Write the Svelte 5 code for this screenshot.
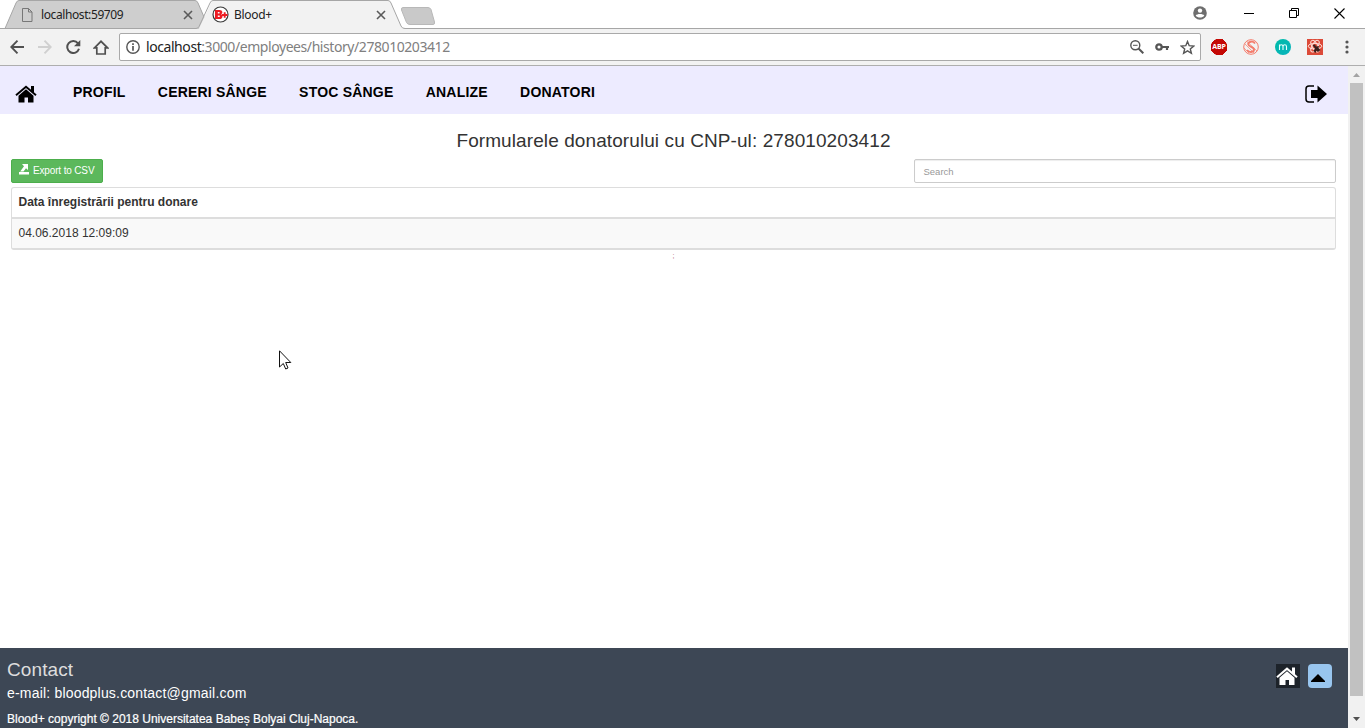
<script>
  const links = ['PROFIL', 'CERERI SÂNGE', 'STOC SÂNGE', 'ANALIZE', 'DONATORI'];
  const rows = ['04.06.2018 12:09:09'];
</script>

<div class="window">
  <div class="tabstrip">
    <svg class="tabshapes" width="440" height="29" viewBox="0 0 440 29">
      <path d="M5 28.5 16 3Q17 .5 19 .5H195Q197 .5 198 3L209 28.5Z" fill="#cecece" stroke="#a6a6a6" />
      <path d="M0 28.5H199L211 3Q212 .5 214 .5H388Q390 .5 391 3L401 26Q402 28.5 405 28.5V29H0Z" fill="#f2f2f2" />
      <path d="M0 28.5H196Q198 28.500 199 26.500L210 3Q211 .5 213 .5H388Q390 .5 391 3L401 26Q402 28.5 405 28.5H440" fill="none" stroke="#a6a6a6" />
      <path d="M403 7.5H428Q430 7.5 431 9.5L434.500 22Q435 24.500 433 24.500H410Q407.500 24.500 406.500 22.500L401.500 10Q401 7.500 403 7.500Z" fill="#c9c9c9" stroke="#b8b8b8" />
    </svg>
    <div class="tab first">
      <svg width="11" height="14" viewBox="0 0 11 14"><path d="M.5.5H6.500L10 4V13.500H.5ZM6.500.5V4H10" fill="none" stroke="#777" /></svg>
      <span>localhost:59709</span>
      <svg class="x" width="10" height="10" viewBox="0 0 10 10"><path d="M1 1 9 9M9 1 1 9" stroke="#5a5a5a" stroke-width="1.600" /></svg>
    </div>
    <div class="tab second">
      <svg width="17" height="17" viewBox="0 0 17 17">
        <circle cx="8.500" cy="8.500" r="7.500" fill="#fff" stroke="#3b3b3b" stroke-width="1.200" />
        <path fill-rule="evenodd" d="M3 4H7.500C11 4 11 7.500 9.200 8.200C11.300 9 11 13 7.500 13H3ZM5.800 6V7.400H7.400Q8 6.700 7.400 6ZM5.800 9.400V11H7.500Q8.300 10.200 7.500 9.400Z" fill="#ed1c24" /><path d="M10 9H15.500M12.700 6.300V11.700" stroke="#ed1c24" stroke-width="1.900" />
      </svg>
      <span>Blood+</span>
      <svg class="x" width="10" height="10" viewBox="0 0 10 10"><path d="M1 1 9 9M9 1 1 9" stroke="#5a5a5a" stroke-width="1.600" /></svg>
    </div>
    <div class="controls">
      <svg width="14" height="14" viewBox="0 0 14 14"><circle cx="7" cy="7" r="6.800" fill="#6e6e6e" /><circle cx="7" cy="4.600" r="2.200" fill="#fff" /><path d="M2.700 9.500C4 7.500 10 7.500 11.300 9.500C9.500 12.300 4.500 12.300 2.700 9.500Z" fill="#fff" /></svg>
      <svg width="10" height="12" viewBox="0 0 10 12"><path d="M0 6.500H10" stroke="#000" /></svg>
      <svg width="10" height="10" viewBox="0 0 10 10"><path d="M.5 2.500H7.500V9.500H.5ZM2.500 2.500V.5H9.500V7.500H7.500" fill="none" stroke="#000" /></svg>
      <svg width="11" height="11" viewBox="0 0 11 11"><path d="M.5.5 10.500 10.500M10.500.5.5 10.500" stroke="#000" stroke-width="1.100" /></svg>
    </div>
  </div>

  <div class="toolbar">
    <div class="navicons">
      <svg width="14" height="14" viewBox="0 0 14 14"><path d="M14 7H1.500M7.500.7 1.300 7 7.500 13.300" fill="none" stroke="#505050" stroke-width="1.900" /></svg>
      <svg width="14" height="14" viewBox="0 0 14 14"><path d="M0 7H12.500M6.500.7 12.700 7 6.500 13.300" fill="none" stroke="#d0d0d0" stroke-width="1.900" /></svg>
      <svg width="15" height="14" viewBox="0 0 15 14"><path d="M12 3.300A6 6 0 1 0 13 8.800" fill="none" stroke="#505050" stroke-width="2" /><path d="M14.300 0V6.300H8Z" fill="#505050" /></svg>
      <svg width="16" height="15" viewBox="0 0 16 15"><path d="M1.500 7.800 8 1.300 14.500 7.800H12.200V14H3.800V7.800Z" fill="none" stroke="#505050" stroke-width="1.700" /></svg>
    </div>
    <div class="address">
      <svg width="14" height="14" viewBox="0 0 14 14"><circle cx="7" cy="7" r="6.200" fill="none" stroke="#555" stroke-width="1.400" /><path d="M7 6V10.800M7 3.300V5" stroke="#555" stroke-width="1.700" /></svg>
      <span class="url">localhost<i>:3000/employees/history/278010203412</i></span>
      <div class="boxicons">
        <svg width="14" height="14" viewBox="0 0 14 14"><circle cx="5.300" cy="5.300" r="4.500" fill="none" stroke="#555" stroke-width="1.400" /><path d="M8.500 8.500 13.300 13.300" stroke="#555" stroke-width="2" /><path d="M3 5.300H7.600" stroke="#555" /></svg>
        <svg width="14" height="8" viewBox="0 0 14 8"><circle cx="4" cy="4" r="2.700" fill="none" stroke="#555" stroke-width="2.300" /><path d="M7 4H14M12 4V7" stroke="#555" stroke-width="2.200" /></svg>
        <svg width="15" height="15" viewBox="0 0 15 15"><path d="M7.500 1.500 9.200 5.700 13.800 6 10.300 8.900 11.400 13.300 7.500 10.900 3.600 13.300 4.700 8.900 1.200 6 5.800 5.700Z" fill="none" stroke="#555" stroke-width="1.400" /></svg>
      </div>
    </div>
    <div class="extensions">
      <div class="abp"><span>ABP</span></div>
      <svg width="16" height="16" viewBox="0 0 16 16" fill="none" stroke="#f47c6c"><circle cx="8" cy="8" r="7.300" /><path d="M12 4.500C10 1.500 5 2.500 5.200 5.300C5.400 8.200 11 7.500 11 10.500C11 13.500 6 14 4 11" stroke-width="1.900" /><path d="M2 5 11 14M4 2.500 14 12M1 9 6 14" stroke-width=".7" /></svg>
      <svg width="16" height="16" viewBox="0 0 16 16"><defs><linearGradient id="m" x2="1" y2="1"><stop stop-color="#00bca8" /><stop offset="1" stop-color="#08b2bd" /></linearGradient></defs><circle cx="8" cy="8" r="8" fill="url(#m)" /><path d="M4.500 11V5.500M4.500 7.500Q4.700 5.700 6.300 5.700T8 7.500V11M8 7.500Q8.200 5.700 9.800 5.700T11.500 7.500V11" fill="none" stroke="#e8ffff" stroke-width="1.100" /></svg>
      <svg width="16" height="16" viewBox="0 0 16 16"><path d="M0 0H16V16H0Z" fill="#dc4a38" /><g fill="none" stroke="#ffe1da" stroke-width="1"><ellipse cx="8" cy="7.200" rx="6.800" ry="2.800" /><ellipse cx="8" cy="7.200" rx="6.500" ry="2.800" transform="rotate(60 8 7.200)" /><ellipse cx="8" cy="7.200" rx="6.500" ry="2.800" transform="rotate(120 8 7.200)" /></g><path d="M5.500 6 8 5.500 9 7.500 12 7 11.500 9 13.500 11 11 13 9.500 11.500 8.500 14 6.500 12 8 9.500Z" fill="#38201d" /></svg>
      <svg class="dots" width="4" height="14" viewBox="0 0 4 14" fill="#555"><circle cx="2" cy="2" r="1.600" /><circle cx="2" cy="7" r="1.600" /><circle cx="2" cy="12" r="1.600" /></svg>
    </div>
  </div>

  <div class="view">
    <div class="page">
      <nav>
        <svg class="home" width="22" height="18" viewBox="0 0 22 18"><path d="M1 10.300 11 1.700 21 10.300" fill="none" stroke="#000" stroke-width="1.900" /><path d="M16 1H19V8L16 5.500ZM11 4.300 18.500 10.800V17.500H13V12.500H9.500V17.500H3.500V10.800Z" /></svg>
        <div class="links">{#each links as link}<span>{link}</span>{/each}</div>
        <svg class="logout" width="22" height="18" viewBox="0 0 22 18"><path d="M9 1H4Q1 1 1 4V14Q1 17 4 17H9" fill="none" stroke="#000" stroke-width="1.500" /><path d="M6 5H12.500V.5L22 9 12.500 17.500V13H6Z" /></svg>
      </nav>
      <main>
        <h1>Formularele donatorului cu CNP-ul: 278010203412</h1>
        <div class="tools">
          <button><svg width="10" height="11" viewBox="0 0 10 11" fill="#fff"><path d="M0 8H10V10.500H0ZM3 0H9V6L7 4.300 4.500 7.500H1.200L5 2.300Z" /></svg><span>Export to CSV</span></button>
          <div class="search"><span>Search</span></div>
        </div>
        <div class="table">
          <div class="head"><span>Data înregistrării pentru donare</span></div>
          {#each rows as row}<div class="row"><span>{row}</span></div>{/each}
        </div>
        <div class="semi">;</div>
      </main>
      <footer>
        <div class="info">
          <h2>Contact</h2>
          <p class="mail">e-mail: bloodplus.contact@gmail.com</p>
          <p class="copy">Blood+ copyright © 2018 Universitatea Babeș Bolyai Cluj-Napoca.</p>
        </div>
        <div class="shortcuts">
          <div class="dark"><svg width="22" height="18" viewBox="0 0 22 18" fill="#fff"><path d="M1 10.300 11 1.700 21 10.300" fill="none" stroke="#fff" stroke-width="2.100" /><path d="M16 .5H19V8L16 5.500ZM11 4.200 18.500 10.700V18H13V13H9.500V18H3.500V10.700Z" /></svg></div>
          <div class="up"><svg width="14" height="8" viewBox="0 0 14 8"><path d="M7 0 14 7V8H0V7Z" /></svg></div>
        </div>
      </footer>
    </div>
    <div class="scrollbar">
      <svg width="7" height="4" viewBox="0 0 7 4"><path d="M3.500 0 7 4H0Z" fill="#a3a3a3" /></svg>
      <div class="thumb"></div>
      <svg width="7" height="4" viewBox="0 0 7 4"><path d="M3.500 4 7 0H0Z" fill="#505050" /></svg>
    </div>
  </div>
  <svg class="cursor" width="13" height="21" viewBox="0 0 13 21"><path d="M.5.8V17L4.300 13.500 6.700 19 9 18 6.700 12.500H11.800Z" fill="#fff" stroke="#111" /></svg>
</div>

<style>
  :global(body) { margin: 0; background: #fff; overflow: hidden; }
  svg { display: block; flex: none; }
  .window { width: 1365px; height: 728px; display: flex; flex-direction: column; position: relative; font-family: "Liberation Sans", Arial, sans-serif; box-sizing: border-box; }
  span, h1, h2, p { white-space: nowrap; }
  .tabstrip { height: 29px; display: flex; position: relative; box-sizing: border-box; border-bottom: 1px solid #a6a6a6; }
  .tabshapes { position: absolute; left: 0; top: 0; }
  .tab { position: relative; display: flex; align-items: center; height: 29px; font: 12px/16px "Noto Sans", sans-serif; color: #222; box-sizing: border-box; }
  .first { width: 211px; padding-left: 22px; gap: 8px; }
  .first span { letter-spacing: -.4px; }
  .second { width: 191px; gap: 5px; padding-left: 1px; }
  .second span { letter-spacing: -.3px; }
  .x { margin-left: auto; }
  .first .x { margin-right: 18px; }
  .second .x { margin-right: 16px; }
  .controls { margin-left: auto; display: flex; align-items: center; height: 26px; padding-right: 20px; }
  .controls svg:nth-child(2) { margin-left: 37px; }
  .controls svg:nth-child(3) { margin-left: 35px; }
  .controls svg:nth-child(4) { margin-left: 35px; }
  .toolbar { height: 37px; flex: none; background: #f2f2f2; border-bottom: 1px solid #aeaeae; display: flex; align-items: center; box-sizing: border-box; padding-left: 10px; }
  .navicons { display: flex; align-items: center; width: 109px; gap: 14px; }
  .navicons svg:last-child { margin-left: -2px; }
  .address { width: 1082px; height: 28px; background: #fff; border: 1px solid #a9a9a9; border-radius: 2px; box-sizing: border-box; display: flex; align-items: center; padding: 0 5px 0 6px; }
  .url { margin-left: 6px; font: 14px/20px "Noto Sans", sans-serif; color: #222; letter-spacing: -.43px; }
  .url i { font-style: normal; color: #808080; }
  .boxicons { margin-left: auto; display: flex; align-items: center; gap: 11px; }
  .extensions { display: flex; align-items: center; gap: 16px; margin-left: 10px; }
  .abp { width: 16px; height: 16px; display: flex; justify-content: center; color: #fff; font: bold 7px/16px "Open Sans", sans-serif; letter-spacing: -.1px; background: linear-gradient(#c40804, #c40804) center / 16px 7px no-repeat, conic-gradient(from 135deg at 50% 50%, #c40804 0 360deg) center / 7px 16px no-repeat, radial-gradient(circle, #c40804 8px, transparent 8.500px); }
  .dots { margin-left: 6px; }
  .view { flex: 1; display: flex; min-height: 0; }
  .page { width: 1348px; display: flex; flex-direction: column; }
  nav { height: 48px; background: #edebff; display: flex; box-sizing: border-box; padding: 0 21px 0 15px; }
  .home, .logout { margin-top: 19px; }
  .home { margin-right: 36px; }
  .logout { margin-left: auto; }
  .links { display: flex; gap: 32.300px; padding-top: 18px; font-weight: bold; font-size: 14px; line-height: 16px; letter-spacing: .2px; color: #000; }
  main { flex: 1; padding: 16px 12px 0 11px; }
  h1 { margin: 0; font-weight: normal; font-size: 19px; line-height: 21px; text-align: center; color: #333; letter-spacing: .09px; }
  .tools { display: flex; justify-content: space-between; margin-top: 8px; }
  button { width: 92px; height: 24px; background: #5cb85c; border: 1px solid #4cae4c; border-radius: 2px; padding: 0 0 0 7px; display: flex; align-items: center; gap: 4px; color: #fff; font: 10px/14px "Liberation Sans", Arial, sans-serif; letter-spacing: -.15px; box-sizing: border-box; }
  button svg { margin-bottom: 3px; }
  .search { width: 422px; height: 24px; border: 1px solid #ccc; border-radius: 2px; box-shadow: inset 0 1px 1px rgba(0,0,0,.075); box-sizing: border-box; padding-left: 8.500px; font-size: 9.500px; line-height: 23px; color: #999; }
  .table { margin-top: 4px; border: 1px solid #ddd; border-bottom-width: 2px; border-radius: 3px; height: 63px; box-sizing: border-box; font-size: 12px; color: #333; overflow: hidden; }
  .head { height: 31px; box-sizing: border-box; border-bottom: 2px solid #ddd; padding-left: 6.500px; line-height: 28px; font-weight: bold; }
  .row { height: 29px; background: #f9f9f9; padding-left: 6.500px; line-height: 28px; }
  .semi { text-align: center; font-size: 7px; line-height: 10px; margin-top: 1px; color: #b06070; }
  footer { height: 80px; background: #3d4755; display: flex; justify-content: space-between; box-sizing: border-box; padding: 11px 16px 0 7px; color: #fff; }
  h2 { margin: 0; font-weight: normal; font-size: 19px; line-height: 21px; color: #ddd; letter-spacing: .1px; }
  p { margin: 0; }
  .mail { font-size: 14px; line-height: 16px; margin-top: 5px; letter-spacing: .19px; }
  .copy { font-size: 12px; line-height: 14px; margin-top: 11px; -webkit-text-stroke: .2px #fff; }
  .shortcuts { display: flex; gap: 8px; margin-top: 5px; }
  .dark, .up { width: 24px; height: 24px; display: flex; justify-content: center; align-items: center; }
  .dark { background: #1d232a; padding-right: 2px; box-sizing: border-box; }
  .up { background: #98c5ee; border-radius: 4px; padding: 4px 4px 0 0; box-sizing: border-box; }
  .scrollbar { width: 17px; background: #f1f1f1; display: flex; flex-direction: column; align-items: center; justify-content: space-between; box-sizing: border-box; padding: 7px 0; }
  .thumb { width: 13px; height: 613px; margin: 6px 0 21px; background: #c1c1c1; }
  .cursor { position: absolute; left: 279px; top: 350px; }
</style>
